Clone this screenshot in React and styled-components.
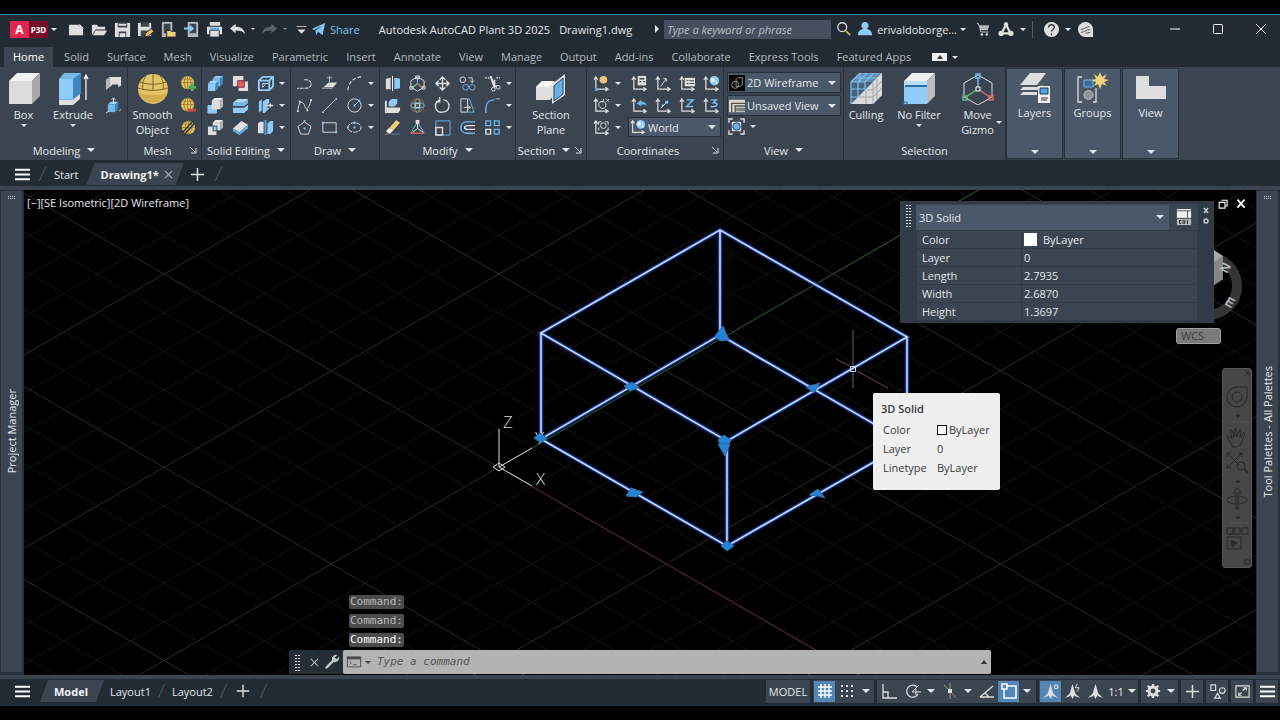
import React from 'react'
import styled, { createGlobalStyle, css } from 'styled-components'

const color = {
  chrome: '#222a33',
  panel: '#3b4551',
  raised: '#4b586a',
  edge: '#27303b',
  text: '#e3e7eb',
  muted: '#b4bac1',
  light: '#dedede',
  shade: '#b5b8bb',
  blue: '#8fcbf7',
  deep: '#3f86bf',
  active: '#5386b7',
  gold: '#e0bf62',
}

const GlobalStyle = createGlobalStyle`
  * { box-sizing: border-box; }
  body {
    margin: 0;
    background: #000;
    color: ${color.text};
    font: 11px/15px 'Open Sans', 'Noto Sans', sans-serif;
  }
  button, input, select { font: inherit; color: inherit; }
  button { padding: 0; border: 0; background: none; }
  svg { display: block; flex: none; }
`

/* ---------- icons ---------- */

const L = color.light
const S = color.shade
const B = color.blue
const D = color.deep
const G = color.gold

const line = (d, stroke = L, w = 1, extra = {}) => (
  <path d={d} fill="none" stroke={stroke} strokeWidth={w} {...extra} />
)

const Cube = ({ x, y, s, k, front, top, side }) => (
  <g>
    <path d={`M${x} ${y + k}h${s}v${s}h${-s}z`} fill={front} />
    <path d={`M${x} ${y + k}l${k} ${-k}h${s}l${-k} ${k}z`} fill={top} />
    <path d={`M${x + s} ${y + k}l${k} ${-k}v${s}l${-k} ${k}z`} fill={side} />
  </g>
)

const ball = (cx, cy, r) => (
  <g>
    <circle cx={cx} cy={cy} r={r} fill={G} />
    {line(`M${cx - r} ${cy}h${2 * r}M${cx} ${cy - r}v${2 * r}M${cx - r * 0.8} ${cy - r * 0.5}h${r * 1.6}`, '#9b7a2c', 0.8)}
    <ellipse cx={cx} cy={cy} rx={r * 0.5} ry={r} fill="none" stroke="#9b7a2c" strokeWidth="0.8" />
  </g>
)

const axes = line('M3 3v12h12M1 5l2-3 2 3M13 13l3 2-3 2', L, 1.3)

const globe = (
  <g>
    <circle cx="12" cy="6" r="5" fill={B} />
    <path d="M9 3l3 1 1 2-3 2-2-2zM13 7l3 1-2 2z" fill="#e8f2fa" />
  </g>
)

const compass = (
  <path d="M9 1l3 10 5 5-5-2-1-1-2 4-2-4-1 1-5 2 5-5z" fill={L} />
)

const icons = {
  fileNew: <path d="M1 4h10l5 5v6H1zM12 3l5 5h-5z" fill={L} />,
  fileOpen: <><path d="M1 15V4h5l2 2h7v3H5z" fill={L} /><path d="M5 10h12l-3 5H2z" fill={L} /></>,
  save: <><path d="M1 2h16v15H1z" fill={L} /><path d="M4 2h10v5H4zM5 11h8v6H5z" fill="#3a444f" /><path d="M6 13h6v4H6zM5 3h8v2H5z" fill={L} /></>,
  saveAs: <><path d="M1 2h14v14H1z" fill={L} /><path d="M4 2h9v4H4zM4 10h8v6H4z" fill="#3a444f" /><path d="M8 17l1-4 6-5 3 3-6 5z" fill="#e8bd62" stroke="#222a33" /></>,
  openDevice: <><path d="M2 1h11v16H2z" fill={S} /><path d="M4 3h7v10H4z" fill="#3a444f" /><path d="M7 10h4l1 1h5v6H7z" fill="#f0cf7e" stroke="#222a33" /></>,
  saveDevice: <><path d="M5 1h11v16H5z" fill={S} /><path d="M7 3h7v10H7z" fill="#3a444f" /><path d="M1 7h6V4l5 4-5 4V9H1z" fill={B} /></>,
  print: <><path d="M4 1h11v4H4zM1 6h16v8H1z" fill={L} /><path d="M4 10h10v7H4z" fill={L} stroke="#222a33" /><path d="M4 7h10v3H4z" fill="#5ea4d8" /></>,
  undo: <path d="M1 8l6-5v3c6 0 9 2 10 8-2-3-5-4-10-4v3z" fill={L} />,
  redo: <path d="M17 8l-6-5v3c-6 0-9 2-10 8 2-3 5-4 10-4v3z" fill="#5b636c" />,
  custom: <path d="M3 5h12v1H3zM4 9h10l-5 5z" fill={L} />,
  share: <path d="M1 9L16 2l-3 14-5-4-2 4-1-5 8-6-9 5z" fill="#7fc3f2" />,
  search: <><circle cx="7" cy="7" r="5" fill="none" stroke={L} strokeWidth="1.5" />{line('M11 11l5 5', '#c9b66a', 2)}</>,
  user: <path d="M9 1a4 4 0 0 1 4 4c0 2-1 3-2 4 4 1 6 3 6 7H1c0-4 2-6 6-7-1-1-2-2-2-4a4 4 0 0 1 4-4z" fill={B} />,
  cart: <><path d="M4 4h12l-2 6H5z" fill={S} />{line('M1 2h2l3 10h9', L)}<circle cx="7" cy="15" r="1.5" fill={L} /><circle cx="13" cy="15" r="1.5" fill={L} /></>,
  network: <>{line('M9 4l5 10H4z', L, 2.5)}<circle cx="9" cy="4" r="2.5" fill={L} /><circle cx="3.5" cy="14" r="3" fill={L} /><circle cx="14.5" cy="14" r="3" fill={L} /></>,
  help: <><circle cx="9" cy="9" r="8" fill={L} />{line('M6 7c0-4 6-4 6 0 0 2-3 2-3 4M9 13v2', '#333c46', 1.5)}</>,
  assistant: <><path d="M9 1a8 8 0 1 0 0 16h8V9a8 8 0 0 0-8-8z" fill={L} />{line('M4 9c3 0 6-3 9-3M4 12c4 0 6-3 10-3M9 13l5-1', '#4a545e', 1)}</>,
  minimize: line('M4 9h10', '#fff'),
  maximize: <rect x="4.5" y="4.5" width="9" height="9" rx="1" fill="none" stroke="#fff" />,
  close: line('M4 4l10 10M14 4L4 14', '#fff'),
  closeTab: line('M4 4l10 10M14 4L4 14', '#aab1b8', 1.5),
  restore: <><path d="M6 3h8v8h-3M3 6h8v8H3z" fill="none" stroke="#fff" strokeWidth="1.5" /></>,
  closeBold: line('M5 4l8 9M13 4l-8 9', '#fff', 2),

  polysolid: <><path d="M1 5l4-3v11l-4 3z" fill={S} /><path d="M5 2h12v9l-3 2v-3H8l-3 3z" fill={L} /></>,
  presspull: <><Cube x={3} y={5} s={8} k={3} front="#75b8ea" top={B} side={D} />{line('M9 1v6M7 3l2-2 2 2M1 17l3-2M15 15l2-2', '#e8edf0')}</>,
  meshAdd: <>{ball(8, 8, 7)}{line('M13 9v8M9 13h8', '#43b05c', 3)}</>,
  meshSub: <>{ball(8, 8, 7)}{line('M8 14h9', '#d24a4a', 3)}</>,
  meshSplit: <>{ball(9, 9, 7)}{line('M2 15L14 2M4 17L16 4', '#2c333b', 1.5)}</>,

  union: <><Cube x={6} y={1} s={8} k={3} front="#78b9ea" top={B} side={D} /><Cube x={1} y={6} s={8} k={3} front={B} top="#a5d6fa" side={D} /></>,
  subtract: <>{line('M1 9v8h9v-8z', B, 1, { fill: B })}<Cube x={5} y={1} s={9} k={3} front={L} top="#f0f0f0" side={S} /></>,
  intersect: <><Cube x={6} y={1} s={8} k={3} front={L} top="#f0f0f0" side={S} /><path d="M1 8h9v9H1z" fill={L} /><path d="M6 7h5v6H6z" fill="#2d4d69" /><path d="M7 8h3v4H7z" fill={B} /></>,
  interfere: <><path d="M1 1h11v11H1zM7 7h10v10H7z" fill={L} /><path d="M6 6h7v7H6z" fill="#e26060" stroke="#7c2d35" /></>,
  slice: <><path d="M1 6l5-4h11l-4 4z" fill="#b4dcf9" /><path d="M1 6h12l4-4v5l-4 3H1z" fill="#74b6e8" /><path d="M1 11h12l4-3v5l-4 4H1z" fill={B} />{line('M1 10.5h12l4-3', '#27303b')}</>,
  slab: <><path d="M1 10l9-8 7 4-9 8z" fill={L} /><path d="M1 10l7 4 9-8v4l-9 7-7-4z" fill="#62a8de" /></>,
  edges: <>{line('M2 6l4-4h11v10l-4 4H2zM2 6h11l4-4M13 6v10', B, 2)}{line('M6 13V9l6 0M6 13l3-3', '#bfe2fb')}</>,
  imprint: <><path d="M2 5l3-3v12l-3 3zM6 5l4-3h3v4l-2 2v3l2 1-5 5H6z" fill={B} />{line('M10 9h7M14 7v4', L, 1.5)}</>,
  separate: <><path d="M1 5l2-2h4v12H1z" fill={L} /><path d="M11 5l3-3h3v11l-3 3h-3z" fill={B} />{line('M9 1v16', '#5aa6df', 2)}</>,

  polyline: line('M1 14h2M4 14h6c8 0 8-8 1-9H8', L, 1.2, { strokeDasharray: '4 1' }),
  planar: <><path d="M4 12l4-4h9l-4 5H2z" fill={L} />{line('M9 1v10M6 3h6M1 14h11', S)}</>,
  arc: line('M2 16C3 8 7 3 16 2', L, 1.2, { strokeDasharray: '4 2' }),
  spline: <>{line('M2 15C3 2 8 5 9 9s4 6 7-6', L)}<path d="M1 14h2v2H1zM3 4h2v2H3zM11 13h2v2h-2zM15 2h2v2h-2z" fill={L} /></>,
  lineTool: <>{line('M3 15L15 3', L)}<path d="M1 15h2v2H1zM15 1h2v2h-2z" fill={B} /></>,
  circle: <><circle cx="9" cy="9" r="7" fill="none" stroke={L} />{line('M9 9l4-4', B)}<path d="M8 8h2v2H8zM13 3h2v2h-2z" fill={B} /></>,
  polygon: <>{line('M9 3l7 5-3 8H5L2 8z', L)}<path d="M8 9h2v2H8zM8 1h2v2H8z" fill={B} /></>,
  rect: <>{line('M2 4h14v10H2z', L)}<path d="M1 3h2v2H1zM15 13h2v2h-2z" fill={B} /></>,
  ellipse: <><ellipse cx="9" cy="9" rx="7" ry="5" fill="none" stroke={L} strokeDasharray="5 1" /><path d="M8 8h2v2H8zM1 8h2v2H1zM8 3h2v2H8z" fill={B} /></>,

  mirror3d: <><path d="M2 4l5-1v12H2z" fill={L} /><path d="M11 3l6 1v10l-6 1z" fill={B} />{line('M9 1v16', '#fff')}</>,
  gizmoMove: <>{line('M9 2l7 4v7l-7 4-7-4V6z', L)}{line('M9 9v-7', '#69b4ea')}{line('M9 9l6 5', '#dc6868', 1.5)}{line('M9 9l-6 5', '#6cc58a', 1.5)}<path d="M7 1h4v3H7zM1 12h3v3H1zM14 12h3v3h-3z" fill="none" stroke={L} /></>,
  move: <>{line('M9 2v14M2 9h14M6 5l3-3 3 3M6 13l3 3 3-3M5 6L2 9l3 3M13 6l3 3-3 3', L, 1.5)}</>,
  copy: <><circle cx="4" cy="5" r="3" fill="none" stroke={L} /><circle cx="7" cy="13" r="3" fill="none" stroke="#6fb6ea" /><circle cx="14" cy="13" r="3" fill="none" stroke="#6fb6ea" />{line('M10 3h4v5M12 6l2 2 2-2', L)}</>,
  trim: <>{line('M1 3h5M13 3h4', L, 1.5, { strokeDasharray: '2 1' })}{line('M7 1l4 12M11 5v7l3 0', L, 2)}<circle cx="10" cy="15" r="2" fill="none" stroke={L} /><circle cx="15" cy="13" r="2" fill="none" stroke={L} /></>,
  align3d: <><path d="M5 5l3-3h6v5l-3 3H5z" fill={B} /><path d="M3 11h14v3l-2 3H3z" fill={L} />{line('M2 17V4', L, 2)}</>,
  gizmoRotate: <><circle cx="9" cy="9" r="7" fill="none" stroke="#c26868" /><ellipse cx="9" cy="9" rx="3" ry="7" fill="none" stroke="#6fc08a" /><ellipse cx="9" cy="9" rx="7" ry="3" fill="none" stroke="#7ab6dc" /><path d="M7 7h4v4H7z" fill="none" stroke={L} /></>,
  rotate: line('M6 3C-2 8 2 17 9 16c9 0 9-12 1-13M6 0v5H2', L, 1.5),
  stretch: <>{line('M2 2h7v14H2z', L)}{line('M9 2l2 0 5 14H9', '#6fb6ea')}{line('M5 11h7M10 9l2 2-2 2', L)}</>,
  fillet: <>{line('M2 17v-5C2 6 6 3 11 3', '#6fb6ea', 1.5)}{line('M12 2h5', S)}</>,
  erase: <><path d="M6 9l7-8 4 3-7 8z" fill="#f1cd76" /><path d="M6 9l4 3-4 4-4-3z" fill="#f3efe7" />{line('M1 16h4', '#d86868')}{line('M8 16h9', '#5c88ad')}</>,
  gizmoScale: <>{line('M9 3L2 15', '#6cc58a')}{line('M9 3l7 12', '#6fb6ea')}{line('M2 15h14', '#d86868', 1.5)}{line('M9 3v7l-5 4M9 10l6 4', L)}<path d="M7 1h4v4H7z" fill={L} /></>,
  scale: <>{line('M2 2h15v15H2z', '#6fb6ea')}{line('M2 9h7v8H2z', L, 1.5)}</>,
  offset: <>{line('M17 3H8C0 3 0 15 8 15h9', '#6fb6ea', 1.5)}{line('M17 7H9c-4 0-4 4 0 4h8', L, 1.5)}</>,
  array: <>{line('M2 2h5v5H2zM11 2h5v5h-5zM11 11h5v5h-5z', '#6fb6ea', 1.5)}{line('M2 11h5v5H2z', L, 1.5)}</>,

  ucsOrigin: <>{axes}<circle cx="11" cy="5" r="4" fill="#f3c36e" /><path d="M2 14h3v3H2z" fill="#5aa6df" /></>,
  ucsCalc: <>{axes}<path d="M7 1h9v10H7z" fill={L} />{line('M9 4h5M9 7h2M13 7h2', '#3b4551', 1.5)}</>,
  ucsView: <>{axes}{line('M6 12l6-8M9 4h3v3', L)}</>,
  ucsNamed: <>{axes}<path d="M6 3h11v9H6z" fill={L} />{line('M8 6h2M11 6h5M8 9h2M11 9h5', '#3b4551')}</>,
  ucsWorld: <>{axes}{globe}</>,
  ucsX: <>{axes}{line('M11 5c-7-2-6 8 0 7 4-1 3-6 1-7M11 2v3H8M14 2l3 3M17 2l-3 3', L)}</>,
  ucsPrev: <>{axes}<path d="M6 7l5-4v2c4 0 5 2 6 5-2-2-3-2-6-2v2z" fill="#6fb6ea" /></>,
  ucs3pt: <>{axes}{line('M6 12l6-6', L)}<path d="M11 4h3v3h-3zM7 8h2v2H7z" fill={B} /></>,
  ucsZ: <>{axes}{line('M8 3h7l-7 7h7', '#7abef0', 1.5)}</>,
  ucs3: <>{axes}{line('M8 3h6l-3 3c6 0 5 5-3 4', '#7abef0', 1.5)}</>,
  ucsFace: <>{axes}{line('M6 6V3h3M13 3h3v3M16 9v3h-2M6 9v3', L)}<circle cx="11" cy="7" r="3" fill="none" stroke={L} /></>,

  wire: <><path d="M0 0h18v18H0z" fill="#050505" /><circle cx="7" cy="11" r="4" fill="none" stroke="#9b9b9b" />{line('M8 5l2-2h5v8l-3 2H8z', '#9b9b9b')}</>,
  unsaved: <><path d="M0 2h18v14H0z" fill="#d9d8c8" />{line('M3 16V6h15M7 16V9h11', '#4f5650', 1.5)}<path d="M8 11h10v4H8z" fill="#7d8378" /></>,
  visual: <>{line('M1 5V1h4M13 1h4v4M17 13v4h-4M5 17H1v-4', L, 1.5)}<path d="M4 4h10v10H4z" fill={L} /><circle cx="9" cy="9" r="4" fill="#6bb1e6" stroke="#2c4c66" /></>,

  grid: line('M5 2v14M9 2v14M13 2v14M2 5h14M2 9h14M2 13h14', '#fff', 1.4),
  snap: <path d="M3 3h2v2H3zM8 3h2v2H8zM13 3h2v2h-2zM3 8h2v2H3zM8 8h2v2H8zM13 8h2v2h-2zM3 13h2v2H3zM8 13h2v2H8zM13 13h2v2h-2z" fill={L} />,
  ortho: line('M2 2v14h14M2 10h5v6', L, 1.3),
  polar: <><path d="M13 5a6 6 0 1 0 1 7" fill="none" stroke={L} strokeWidth="1.3" />{line('M8 10l7-7M8 10h9M12 7v6', L)}</>,
  iso: <>{line('M9 1v16M9 9L3 3', '#8fb08a')}{line('M9 9l6 7', '#c46d6d')}<path d="M7 7h4v4H7z" fill={L} /></>,
  track: line('M2 15h14M2 15L15 4M7 11l4 4', L, 1.3),
  osnap: line('M6 4h10v12H4V7M2 2h5v5H2z', '#fff', 1.5),
  annoVis: <>{compass}<circle cx="15" cy="4" r="2" fill="none" stroke="#fff" /></>,
  annoAuto: <>{compass}{line('M14 1l-2 4h4l-2 4', L)}</>,
  anno: compass,
  gear: <><circle cx="9" cy="9" r="4.500" fill="none" stroke={L} strokeWidth="3.500" />{line('M9 1v3M9 14v3M1 9h3M14 9h3M3 3l3 3M12 12l3 3M15 3l-3 3M6 12l-3 3', L, 2.5)}</>,
  plus: line('M9 2v14M2 9h14', L, 1.6),
  shapes: <>{line('M2 2h5v6H2zM9 11l3 5H6z', L, 1.2)}<circle cx="14" cy="8" r="3" fill="none" stroke={L} strokeWidth="1.2" /></>,
  screen: <>{line('M2 3h14v12H2z', L, 1.2)}{line('M9 8l4-3M10 5h3v3M8 10l-3 3M5 10v3h3', L, 1.2)}</>,
  menu: line('M1 4h16M1 9h16M1 14h16', '#fff', 2),

  wrench: <path d="M2 14l7-7a5 5 0 0 1 6-6l-3 3 2 2 3-3a5 5 0 0 1-6 6l-7 7a1 1 0 0 1-2-2z" fill="#c3c7ca" />,
  prompt: <>{line('M1.500 3.500h15v11h-15z', '#4a4a4a')}<path d="M1 3h16v3H1z" fill="#4a4a4a" />{line('M4 8l2 2-2 2M8 12h4', '#4a4a4a')}</>,
  cui: <><path d="M1 0h16v10H1z" fill="#f1f1f1" />{line('M1 2h16M13 2v8', '#3b4551')}<path d="M1 11h16v7H1z" fill="#b9bdc1" />{line('M6 13H4v3h2M8 12v4h2v-4M13 12v5', '#2b343e', 1.2)}</>,
}

const Icon = ({ name, size = 18 }) => (
  <svg width={size} height={size} viewBox="0 0 18 18" aria-hidden="true">{icons[name]}</svg>
)

const Caret = styled.span`
  flex: none;
  width: 0;
  height: 0;
  border: ${p => p.$size || 3}px solid transparent;
  border-top-color: ${p => p.$color || color.text};
  border-bottom-width: 0;
  ${p => p.$up && css`
    border-bottom: 4px solid ${p.$color};
    border-top: 0;
  `}
`

const bigIcons = {
  box: <Cube x={1} y={0} s={23} k={8} front="#dcdcdc" top="#f1f1f1" side="#a9a9a9" />,
  extrude: <><path d="M2 25l14 0 7-5v6l-7 6H2z" fill={L} /><path d="M2 6l5-6h17v20l-8 7H2z" fill="#77b8e8" /><path d="M2 6h14v20H2z" fill={B} /><path d="M16 6l8-6v20l-8 6z" fill={D} />{line('M29 27V3M27 6l2-4 2 4', '#fff', 1.2)}</>,
  smooth: <><circle cx="16" cy="16" r="15" fill="#e2c468" /><path d="M2 20c8 3 20 3 28 0a15 15 0 0 1-28 0z" fill="#d3ab4b" />{line('M1 15c8 3 22 3 30 0M3 9c8 3 18 3 26 0M16 1v16M9 3C6 7 5 12 6 16M23 3c3 4 4 9 3 13', '#7d6524')}</>,
  section: <><path d="M1 14l6-6h12v14l-4 5H1z" fill={L} /><path d="M1 14l6-6h13l-5 6z" fill="#f6f6f6" /><path d="M17 11L30 1v21L17 31z" fill={L} /><path d="M19 13l9-8v16l-9 7z" fill="#68b1e8" stroke="#24435c" /></>,
  culling: <><Cube x={1} y={0} s={22} k={9} front="#45637d" top="#5f8fb3" side="#bfc3c6" /><path d="M1 31L32 0v22l-9 9z" fill="#d9dadb" />{line('M1 31V9h15M1 9l9-9h21M8 9v15M15 9v8M1 16h14M1 24h7M8 9l9-9M15 9l9-9M5 5h22M10 0v9', '#7ec0ef', 1.2)}{line('M23 10v21M9 24h14l9-9M17 17h6l9-9M16 17v14M27 6v21', '#a2a5a8')}</>,
  noFilter: <><Cube x={1} y={0} s={23} k={8} front={B} top="#efefef" side="#bcbcbc" />{line('M2 13h22', '#2e6fa6', 2)}<path d="M1 8h23v4H1z" fill="#b7dff9" />{line('M1 29h3v3H1z', '#2e6fa6')}</>,
  gizmo: <>{line('M16 2l14 8v14l-14 8-14-8V10z', '#d8dcdf')}{line('M16 16V5', '#69b4ea', 1.5)}{line('M16 16L4 24', '#5cb87c', 1.5)}{line('M16 16l12 8', '#dc6868', 1.5)}{line('M14 1h4v4h-4z', '#69b4ea', 1.500)}{line('M1 23h4v4H1z', '#5cb87c', 1.5)}{line('M27 23h4v4h-4z', '#dc6868', 1.5)}<path d="M14 14h4v4h-4z" fill="#3b4551" stroke="#fff" /></>,
  layers: <><path d="M1 13L11 1h16L18 13zM1 18l3-3h16l4-3-6 6zM1 23l3-3h14v3z" fill={L} /><path d="M19 14h12v17H19z" fill="#f1f1f1" /><path d="M21 16h8v6h-8z" fill="#4fa3e0" stroke="#1f3246" />{line('M22 26h7M22 28h6', '#333')}</>,
  groups: <>{line('M5 5H1v25h4M19 16v14h-3', L, 1.3)}<path d="M7 8h9v7H7z" fill="#356f9e" stroke="#72b4e4" /><circle cx="11.500" cy="23" r="4.500" fill="#8d949c" stroke="#b8bdc2" /><path d="M23 0l2 5 5-3-3 5 5 1-5 2 3 4-5-2-2 5-2-5-4 2 2-4-5-2 5-1-2-5 4 3z" fill="#f5d27c" /></>,
  baseView: <path d="M1 4h13v10h17v13H1z" fill={L} />,
}

const BigIcon = ({ name }) => (
  <svg width="32" height="32" viewBox="0 0 32 32" aria-hidden="true">{bigIcons[name]}</svg>
)

/* ---------- frame ---------- */

const Shell = styled.div`
  display: flex;
  flex-direction: column;
  height: 100vh;
  min-height: 560px;
  padding: 14px 0;
  overflow: hidden;
`

const TitleBar = styled.header`
  display: flex;
  align-items: center;
  height: 33px;
  padding: 0 10px 4px;
  background: ${color.chrome};
  border-top: 1px solid #2b87ad;
`

const Group = styled.div`
  display: flex;
  align-items: center;
  gap: ${p => p.$gap || 5}px;
  margin-left: ${p => p.$before || 0}px;
`

const Logo = styled.button`
  display: flex;
  height: 17px;
  line-height: 17px;
  color: #fff;
  font-weight: 700;
`

const LogoMark = styled.span`
  width: 19px;
  background: #e5244f;
  font-size: 12px;
`

const LogoName = styled.span`
  width: 19px;
  background: #7a0c2b;
  font-size: 8px;
`

const IconButton = styled.button`
  display: flex;
  align-items: center;
  justify-content: center;
  min-width: 18px;
  height: 18px;
`

const ShareLink = styled.a`
  display: flex;
  align-items: center;
  gap: 3px;
  margin-left: -4px;
  color: #7fc3f2;
  text-decoration: none;
`

const TitleText = styled.h1`
  display: flex;
  gap: 9px;
  margin: 0 23px 0 auto;
  font-size: 11px;
  font-weight: 400;
  white-space: nowrap;
`

const Play = styled.span`
  border: 4px solid transparent;
  border-left-color: ${color.text};
  border-right-width: 0;
`

const SearchBox = styled.input`
  width: 167px;
  height: 19px;
  margin-left: 5px;
  padding: 0 3px;
  border: 0;
  background: #454f5f;
  font-style: italic;
  &::placeholder { color: #b9bfc6; }
`

const Separator = styled.span`
  width: 1px;
  height: 17px;
  margin: 0 4px 0 1px;
  background: #55606b;
`

const TabBar = styled.nav`
  display: flex;
  align-items: center;
  height: 20px;
  padding-left: 4px;
  background: ${color.chrome};
`

const RibbonTab = styled.button`
  height: 20px;
  padding: 0 9px 1px;
  margin-right: ${p => (p.$active ? 2 : 0)}px;
  background: ${p => (p.$active ? color.panel : 'transparent')};
  color: ${p => (p.$active ? '#fff' : color.muted)};
  white-space: nowrap;
`

const Toggle = styled.button`
  display: flex;
  align-items: center;
  justify-content: center;
  width: 15px;
  height: 8px;
  margin: 0 5px 0 12px;
  background: #eee;
`

/* ---------- ribbon ---------- */

const Ribbon = styled.div`
  display: flex;
  height: 93px;
  padding-left: 1px;
  background: ${color.panel};
`

const PanelBox = styled.section`
  display: flex;
  flex-direction: column;
  flex: 0 0 ${p => p.$width}px;
  border-right: 1px solid ${color.edge};
`

const PanelBody = styled.div`
  display: flex;
  flex: 1;
  padding: 5px 0 0 ${p => p.$pad || 0}px;
`

const PanelTitle = styled.div`
  display: flex;
  align-items: center;
  justify-content: center;
  gap: 2px;
  height: 19px;
  padding-bottom: 1px;
`

const Launcher = styled.svg`
  margin-left: auto;
`

const PanelName = styled.span`
  display: flex;
  align-items: center;
  gap: 7px;
  margin-left: ${p => (p.$far ? 'auto' : 0)};
`

const BigTool = styled.button`
  display: flex;
  flex-direction: column;
  align-items: center;
  gap: 2px;
  width: ${p => p.$width}px;
  padding-top: 1px;
`

const WithCaret = styled.span`
  display: flex;
  align-items: center;
  gap: ${p => p.$gap}px;
  padding-left: ${p => p.$before || 0}px;
`

const ToolGrid = styled.div`
  display: grid;
  grid-template-columns: repeat(${p => p.$cols}, ${p => p.$cell || 25}px) ${p => (p.$carets ? '8px' : '')};
  grid-auto-rows: 22px;
  align-items: center;
  justify-items: center;
`

const Picker = styled.div`
  display: flex;
  align-items: center;
  gap: 1px;
  width: ${p => p.$width}px;
  height: ${p => p.$height || 20}px;
  padding: 0 4px 0 1px;
  background: ${color.raised};
  border: 1px solid ${p => (p.$flat ? color.raised : color.edge)};
  select {
    flex: 1;
    min-width: 0;
    border: 0;
    outline: 0;
    padding: 0 0 0 1px;
    background: transparent;
    appearance: none;
  }
`

const Stack = styled.div`
  display: flex;
  flex-direction: column;
  gap: ${p => p.$gap || 0}px;
`

const Collapsed = styled.button`
  display: flex;
  flex-direction: column;
  align-items: center;
  width: 57px;
  height: 91px;
  margin: 1px 1px 0 0;
  padding: 3px 0 4px;
  background: ${color.raised};
  border: 1px solid ${color.edge};
  gap: 1px;
  ${Caret} { margin-top: auto; }
`

const Panel = ({ title, width, menu, launcher, pad, children }) => (
  <PanelBox $width={width}>
    <PanelBody $pad={pad}>{children}</PanelBody>
    <PanelTitle>
      <PanelName $far={launcher}>{title}{menu && <Caret $size={4} />}</PanelName>
      {launcher && (
        <Launcher width="12" height="8" viewBox="0 0 12 8">
          <path d="M1 1l5 5M7 2v5H2" fill="none" stroke={L} />
        </Launcher>
      )}
    </PanelTitle>
  </PanelBox>
)

const Tools = ({ rows, cell, carets }) => (
  <ToolGrid $cols={rows[0].length} $cell={cell} $carets={carets}>
    {rows.map(row => (
      <React.Fragment key={row[0]}>
        {row.map(name => (
          <IconButton key={name} aria-label={name}><Icon name={name} size={17} /></IconButton>
        ))}
        {carets && <Caret $size={3} />}
      </React.Fragment>
    ))}
  </ToolGrid>
)

const Select = ({ icon, label, ...rest }) => (
  <Picker {...rest}>
    {icon && <Icon name={icon} size={16} />}
    <select aria-label={label} defaultValue={label}><option>{label}</option></select>
    <Caret $size={4} />
  </Picker>
)

/* ---------- document tabs ---------- */

const FileTabs = styled.nav`
  display: flex;
  align-items: center;
  height: 26px;
  padding: 2px 0 0 13px;
  background: ${color.chrome};
`

const Slash = styled.span`
  width: 1px;
  height: 14px;
  margin: 0 ${p => p.$space || 12}px;
  background: #505a65;
  transform: skewX(-24deg);
`

const FlatTab = styled.button`
  height: 22px;
`

const SlantTab = styled.div`
  display: flex;
  align-items: center;
  gap: 1px;
  padding: 0 ${p => p.$pad}px 0 14px;
  background: ${color.panel};
  clip-path: polygon(8px 0, 100% 0, calc(100% - 8px) 100%, 0 100%);
  button { font-weight: 700; color: #f2f4f6; }
`

/* ---------- workspace ---------- */

const Workspace = styled.main`
  display: flex;
  flex: 1;
  min-height: 0;
  border-top: 4px solid ${color.panel};
  border-bottom: 4px solid ${color.panel};
`

const SideBar = styled.aside`
  display: flex;
  flex-direction: column;
  align-items: center;
  justify-content: center;
  flex: 0 0 24px;
  position: relative;
  background: ${color.panel};
  border: solid ${color.edge};
  border-width: 1px 2px 3px 1px;
  span { writing-mode: vertical-rl; transform: rotate(180deg); white-space: nowrap; }
`

const Dots = styled.i`
  position: absolute;
  top: 5px;
  width: 9px;
  height: 4px;
  background: conic-gradient(#c8cdd2 25%, transparent 0) 0 0 / 2px 2px;
`

const Canvas = styled.div`
  position: relative;
  flex: 1;
  min-width: 0;
  overflow: hidden;
  background: #000;
`

const Drawing = styled.svg`
  position: absolute;
  inset: 0;
  width: 100%;
  height: 100%;
`

const ViewLabel = styled.div`
  position: absolute;
  top: 5px;
  left: 3px;
`

const WindowButtons = styled.div`
  position: absolute;
  top: 5px;
  right: 6px;
  display: flex;
`

const PropsPalette = styled.section`
  position: absolute;
  top: 11px;
  right: 42px;
  display: flex;
  width: 314px;
  padding: 3px 0 2px;
  background: #303b47;
`

const Grip = styled.i`
  width: 6px;
  height: ${p => p.$tall || 16}px;
  margin: 1px 5px 0;
  background: conic-gradient(from 90deg at 1px 1px, transparent 75%, #e3e6e9 0) 0 0 / 3px 3px;
`

const PropsHead = styled.div`
  display: flex;
  align-items: center;
  gap: 7px;
  height: 26px;
`

const PropsMain = styled.div`
  flex: 1;
  background: ${color.panel};
`

const PropsTable = styled.table`
  width: 100%;
  border-collapse: collapse;
  th, td {
    height: 18px;
    padding: 0 3px 0 5px;
    border: 1px solid #303b47;
    line-height: 15px;
    text-align: left;
    font-weight: 400;
  }
  th { width: 105px; }
  td { padding-left: 2px; }
`

const Swatch = styled.i`
  display: inline-block;
  width: ${p => p.$size}px;
  height: ${p => p.$size}px;
  margin-right: ${p => p.$gap}px;
  vertical-align: ${p => (p.$line ? -1 : -2)}px;
  background: #fff;
  border: ${p => (p.$line ? '1px solid #111' : 0)};
`

const PropsSide = styled.div`
  display: flex;
  flex-direction: column;
  align-items: center;
  width: 16px;
  padding-top: 2px;
`

const HoverTip = styled.div`
  position: absolute;
  top: 203px;
  left: 849px;
  width: 127px;
  height: 97px;
  padding: 8px;
  background: #efefef;
  border-radius: 2px;
  color: #3a3a3a;
  strong { display: block; font-weight: 600; }
  dl {
    display: grid;
    grid-template-columns: 54px 1fr;
    grid-auto-rows: 19px;
    align-items: center;
    margin: 4px 0 0 2px;
  }
  dd { margin: 0; white-space: nowrap; }
`

const Wcs = styled.button`
  position: absolute;
  top: 138px;
  right: 35px;
  width: 45px;
  height: 16px;
  padding-left: 4px;
  border: 1px solid #a0a0a0;
  border-radius: 3px;
  background: #7b7b7b;
  color: #3c3c3c;
  line-height: 12px;
  text-align: left;
`

const NavBar = styled.div`
  position: absolute;
  top: 178px;
  right: 4px;
  width: 30px;
  height: 200px;
  border: 1px solid #555;
  border-radius: 3px;
  background: #464646;
`

const CommandArea = styled.div`
  position: absolute;
  bottom: 1px;
  left: 265px;
  right: 265px;
  font: 11px/14px 'DejaVu Sans Mono', monospace;
`

const History = styled.ol`
  display: flex;
  flex-direction: column;
  align-items: flex-start;
  gap: 5px;
  margin: 0 0 3px 60px;
  padding: 0;
  list-style: none;
  li {
    padding: 0 1px;
    background: #4c4c4c;
    border-radius: 2px;
    color: #b9b9b9;
  }
  li:last-child { color: #fff; }
`

const CommandLine = styled.div`
  display: flex;
  align-items: center;
  height: 24px;
  background: #242c35;
`

const CommandField = styled.label`
  display: flex;
  flex: 1;
  align-items: center;
  gap: 3px;
  height: 24px;
  padding: 0 4px 0 3px;
  margin-left: 2px;
  background: #b3b3b3;
  border-radius: 2px;
  input {
    flex: 1;
    border: 0;
    outline: 0;
    padding-left: 3px;
    background: none;
    color: #333;
    font-style: italic;
    &::placeholder { color: #555; }
  }
`

/* ---------- status bar ---------- */

const StatusBar = styled.footer`
  display: flex;
  align-items: center;
  flex: 0 0 27px;
  padding: 0 2px 3px 13px;
  background: ${color.chrome};
`

const StatusTools = styled.div`
  display: flex;
  gap: 3px;
  margin-left: auto;
`

const StatusGroup = styled.div`
  display: flex;
  align-items: center;
  justify-content: center;
  width: ${p => p.$width}px;
  height: 23px;
  background: ${color.panel};
`

const StatusButton = styled.button`
  display: flex;
  align-items: center;
  justify-content: center;
  width: ${p => p.$width || 23}px;
  height: 21px;
  background: ${p => (p.$active ? color.active : 'transparent')};
`

/* ---------- isometric drawing ---------- */

const ORIGIN = { x: 498.7, y: 467.3 }
const SLOPE = 0.5774
const STEP = 38.64

const IsoGrid = () => {
  const lines = []
  for (let k = -24; k <= 24; k++) {
    [1, -1].forEach(dir => {
      const at = x => ORIGIN.y + k * STEP + dir * SLOPE * (x - ORIGIN.x)
      lines.push({ key: `${dir}:${k}`, major: k % 5 === 0, y1: at(0), y2: at(1280) })
    })
  }
  return lines.map(l => (
    <line key={l.key} x1="0" x2="1280" y1={l.y1} y2={l.y2} stroke={l.major ? '#2b2b2e' : '#141415'} />
  ))
}

const EDGES = 'M720 230L541 333L727 441L907 337zM541 333V439L727 546L907 443V337M727 441V546M720 230V335L541 439M720 335L907 443'
const GRIPS = [
  'M714 337l9-11 6 14-8 1z', 'M624 386l8-4 7 5-9 4z', 'M534 438l6-5 7 5-6 5z',
  'M626 496l5-8 12 4-7 5z', 'M721 546l6-5 7 5-7 5z', 'M809 495l9-6 7 9-7-2z',
  'M806 387l14-4-6 10z', 'M718 440l6-5 7 5-2 4h-9z', 'M718 444h12l-5 12z',
]

const Model = () => (
  <Drawing viewBox="24 190 1232 485" preserveAspectRatio="xMinYMin slice">
    <IsoGrid />
    <path d="M532 448L980 189" stroke="#1f5523" />
    <path d="M532 486.500L863 677" stroke="#5a2424" />
    <path d={EDGES} fill="none" stroke="#0f2f86" strokeWidth="5" opacity="0.5" />
    <path d={EDGES} fill="none" stroke="#2a57c4" strokeWidth="3" />
    <path d={EDGES} fill="none" stroke="#e6eeff" strokeWidth="1.300" />
    <g fill="none" stroke="#dadada">
      <path d="M499 467V429M499 467l33-19M499 467l33 19M493 467l6-4 6 4-6 4z" />
      <path d="M853 330v36M853 372v16" stroke="#62626e" />
      <path d="M836 359l14 7M857 371l31 17" stroke="#6b4a44" />
      <path d="M850.500 366.500h5v5h-5z" />
    </g>
    <g fill="#dadada" fontFamily="Open Sans" fontSize="17" fontWeight="300">
      <text x="503" y="428">Z</text>
      <text x="536" y="485">X</text>
      <text x="535" y="444">Y</text>
    </g>
    {GRIPS.map(d => <path key={d} d={d} fill="#2583d8" stroke="#33699c" />)}
    <circle cx="1208" cy="286" r="29" fill="none" stroke="#353535" strokeWidth="10" />
    <path d="M1190 256l24-6 9 6v23l-9 6-24-8z" fill="#a9a9a9" />
    <path d="M1214 262l9-6v23l-9 6z" fill="#868686" />
    <g fill="#b5b5b5" fontFamily="Liberation Sans" fontSize="13" fontWeight="700">
      <text transform="translate(1227 274) rotate(-62)">N</text>
      <text transform="translate(1224 304) rotate(30)">E</text>
    </g>
  </Drawing>
)

const NavIcons = () => (
  <svg width="28" height="198" viewBox="0 0 28 198" fill="none" stroke="#292929">
    <path d="M22 3h4v4M22 7l4-4M22 191h5v4h-5z" />
    <path d="M14 18h10v10a10 10 0 1 1-10-10z" />
    <circle cx="14" cy="28" r="5" />
    <path d="M13 46h4l-2 2zM13 112h4l-2 2zM13 148h4l-2 2z" fill="#292929" />
    <path d="M9 76l-5-8c1-2 3 0 5 2l-2-9c2-2 3 3 4 7l1-9c2 0 2 4 2 9l3-8c2 1 0 6 0 9l4-6c2 1-2 8-3 12l-3 3h-6z" />
    <path d="M4 84l15 15M19 84L4 99M4 88v-4h4M15 84h4v4M4 95v4h4" />
    <circle cx="18" cy="97" r="4" /><path d="M21 100l4 4" strokeWidth="2" />
    <path d="M13 140v-16h-3l4-5 4 5h-3v16z" />
    <ellipse cx="14" cy="131" rx="10" ry="4" />
    <path d="M4 159h6v6H4zM11 159h6v6h-6zM19 159h6v6h-6zM4 168h14v12H4z" />
    <path d="M8 171l6 3-5 4z" fill="#292929" />
    <path d="M8 53h17M8 154h17" stroke="#555" />
  </svg>
)

const tabs = ['Home', 'Solid', 'Surface', 'Mesh', 'Visualize', 'Parametric', 'Insert', 'Annotate', 'View',
  'Manage', 'Output', 'Add-ins', 'Collaborate', 'Express Tools', 'Featured Apps']

const properties = [['Layer', '0'], ['Length', '2.7935'], ['Width', '2.6870'], ['Height', '1.3697']]

const Title = () => (
  <TitleBar>
    <Logo aria-label="Application menu"><LogoMark>A</LogoMark><LogoName>P3D</LogoName></Logo>
    <Group $before={3}><Caret /></Group>
    <Group $gap={5} $before={10}>
      {['fileNew', 'fileOpen', 'save', 'saveAs', 'openDevice', 'saveDevice', 'print', 'undo'].map(name => (
        <IconButton key={name} aria-label={name}><Icon name={name} size={17} /></IconButton>
      ))}
      <Caret $size={2} />
      <IconButton aria-label="Redo"><Icon name="redo" size={17} /></IconButton>
      <Caret $size={2} $color="#7d858d" />
      <IconButton aria-label="Customize"><Icon name="custom" size={15} /></IconButton>
      <ShareLink href="#share"><Icon name="share" size={16} />Share</ShareLink>
    </Group>
    <TitleText><span>Autodesk AutoCAD Plant 3D 2025</span><span>Drawing1.dwg</span></TitleText>
    <Play />
    <SearchBox aria-label="Search" placeholder="Type a keyword or phrase" />
    <Group $gap={3} $before={4}>
      <IconButton aria-label="Search"><Icon name="search" size={16} /></IconButton>
      <IconButton aria-label="Account"><Icon name="user" size={16} /></IconButton>
      <span>erivaldoborge...</span>
      <Caret />
    </Group>
    <Group $before={8}>
      <IconButton aria-label="Store"><Icon name="cart" size={15} /></IconButton>
      <IconButton aria-label="Apps"><Icon name="network" size={16} /></IconButton>
      <Caret />
      <Separator />
      <IconButton aria-label="Help"><Icon name="help" size={17} /></IconButton>
      <Caret />
      <IconButton aria-label="Assistant"><Icon name="assistant" size={17} /></IconButton>
    </Group>
    <Group $gap={25} $before={72}>
      {['minimize', 'maximize', 'close'].map(name => (
        <IconButton key={name} aria-label={name}><Icon name={name} /></IconButton>
      ))}
    </Group>
  </TitleBar>
)

const RibbonPanels = () => (
  <Ribbon>
    <Panel title="Modeling" width={127} menu>
      <BigTool $width={45}><BigIcon name="box" />Box<Caret $size={3} /></BigTool>
      <BigTool $width={54}><BigIcon name="extrude" />Extrude<Caret $size={3} /></BigTool>
      <Tools cell={27} rows={[['polysolid'], ['presspull']]} />
    </Panel>
    <Panel title="Mesh" width={74} launcher>
      <BigTool $width={49}><BigIcon name="smooth" />Smooth<br />Object</BigTool>
      <Tools cell={22} rows={[['meshAdd'], ['meshSub'], ['meshSplit']]} />
    </Panel>
    <Panel title="Solid Editing" width={89} pad={1} menu>
      <Tools carets rows={[['union', 'interfere', 'edges'], ['subtract', 'slice', 'imprint'], ['intersect', 'slab', 'separate']]} />
    </Panel>
    <Panel title="Draw" width={89} pad={1} menu>
      <Tools carets rows={[['polyline', 'planar', 'arc'], ['spline', 'lineTool', 'circle'], ['polygon', 'rect', 'ellipse']]} />
    </Panel>
    <Panel title="Modify" width={136} menu>
      <Tools
        carets
        rows={[
          ['mirror3d', 'gizmoMove', 'move', 'copy', 'trim'],
          ['align3d', 'gizmoRotate', 'rotate', 'stretch', 'fillet'],
          ['erase', 'gizmoScale', 'scale', 'offset', 'array'],
        ]}
      />
    </Panel>
    <Panel title="Section" width={71} menu launcher>
      <BigTool $width={70}><BigIcon name="section" />Section<br />Plane</BigTool>
    </Panel>
    <Panel title="Coordinates" width={137} pad={2} launcher>
      <Tools carets rows={[['ucsOrigin'], ['ucsX'], ['ucsFace']]} />
      <Stack $gap={1}>
        <Group $before={5}>
          <Tools cell={24} rows={[['ucsCalc', 'ucsView', 'ucsNamed', 'ucsWorld'], ['ucsPrev', 'ucs3pt', 'ucsZ', 'ucs3']]} />
        </Group>
        <Group $before={6}><Select icon="ucsWorld" label="World" $width={93} /></Group>
      </Stack>
    </Panel>
    <Panel title="View" width={120} pad={3} menu>
      <Stack $gap={2}>
        <Select icon="wire" label="2D Wireframe" $width={114} $height={21} />
        <Select icon="unsaved" label="Unsaved View" $width={114} $height={21} />
        <Group $before={1}><Icon name="visual" size={17} /><Caret /></Group>
      </Stack>
    </Panel>
    <Panel title="Selection" width={162}>
      <BigTool $width={44}><BigIcon name="culling" />Culling</BigTool>
      <BigTool $width={62}><BigIcon name="noFilter" />No Filter<Caret $size={3} /></BigTool>
      <BigTool $width={55}>
        <BigIcon name="gizmo" />
        <WithCaret $gap={2} $before={8}><span>Move<br />Gizmo</span><Caret /></WithCaret>
      </BigTool>
    </Panel>
    <Collapsed><BigIcon name="layers" />Layers<Caret $size={4} /></Collapsed>
    <Collapsed><BigIcon name="groups" />Groups<Caret $size={4} /></Collapsed>
    <Collapsed><BigIcon name="baseView" />View<Caret $size={4} /></Collapsed>
  </Ribbon>
)

const Properties = () => (
  <PropsPalette>
    <Grip $tall={24} />
    <PropsMain>
      <PropsHead>
        <Select label="3D Solid" $width={253} $height={25} $flat />
        <Icon name="cui" size={16} />
      </PropsHead>
      <PropsTable>
        <tbody>
          <tr><th scope="row">Color</th><td><Swatch $size={13} $gap={6} />ByLayer</td></tr>
          {properties.map(([name, value]) => (
            <tr key={name}><th scope="row">{name}</th><td>{value}</td></tr>
          ))}
        </tbody>
      </PropsTable>
    </PropsMain>
    <PropsSide>
      <svg width="8" height="20" viewBox="0 0 8 20" fill="none" stroke="#c4c9ce">
        <path d="M2 2l4 5M6 2L2 7" strokeWidth="1.500" />
        <circle cx="4" cy="15" r="2" strokeWidth="1.500" />
      </svg>
    </PropsSide>
  </PropsPalette>
)

const Status = () => (
  <StatusBar>
    <IconButton aria-label="Layouts"><Icon name="menu" size={17} /></IconButton>
    <Group $before={9}>
      <SlantTab $pad={16}><FlatTab>Model</FlatTab></SlantTab>
    </Group>
    <Group $before={6} $gap={1}>
      <FlatTab>Layout1</FlatTab><Slash $space={9} />
      <FlatTab>Layout2</FlatTab><Slash $space={9} />
      <IconButton aria-label="New layout"><Icon name="plus" size={16} /></IconButton>
      <Slash $space={10} />
    </Group>
    <StatusTools>
      <StatusGroup $width={44}><StatusButton $width={44}>MODEL</StatusButton></StatusGroup>
      <StatusGroup $width={61}>
        <StatusButton $width={21} $active aria-label="Grid"><Icon name="grid" /></StatusButton>
        <StatusButton aria-label="Snap"><Icon name="snap" /></StatusButton>
        <StatusButton $width={15} aria-label="Snap options"><Caret $size={4} /></StatusButton>
      </StatusGroup>
      <StatusGroup $width={159}>
        <StatusButton aria-label="Ortho"><Icon name="ortho" /></StatusButton>
        <StatusButton aria-label="Polar"><Icon name="polar" /></StatusButton>
        <StatusButton $width={14} aria-label="Polar options"><Caret $size={4} /></StatusButton>
        <StatusButton aria-label="Isodraft"><Icon name="iso" /></StatusButton>
        <StatusButton $width={14} aria-label="Isodraft options"><Caret $size={4} /></StatusButton>
        <StatusButton aria-label="Tracking"><Icon name="track" /></StatusButton>
        <StatusButton $width={21} $active aria-label="Object snap"><Icon name="osnap" /></StatusButton>
        <StatusButton $width={16} aria-label="Object snap options"><Caret $size={4} /></StatusButton>
      </StatusGroup>
      <StatusGroup $width={99}>
        <StatusButton $width={21} $active aria-label="Annotation visibility"><Icon name="annoVis" size={17} /></StatusButton>
        <StatusButton aria-label="Auto scale"><Icon name="annoAuto" size={17} /></StatusButton>
        <StatusButton aria-label="Annotation"><Icon name="anno" size={17} /></StatusButton>
        <StatusButton $width={31}><WithCaret $gap={4}>1:1<Caret $size={4} /></WithCaret></StatusButton>
      </StatusGroup>
      <StatusGroup $width={37}>
        <StatusButton aria-label="Workspace"><Icon name="gear" size={16} /></StatusButton>
        <StatusButton $width={14} aria-label="Workspace options"><Caret $size={4} /></StatusButton>
      </StatusGroup>
      {['plus', 'shapes', 'screen', 'menu'].map(name => (
        <StatusGroup key={name} $width={22}>
          <StatusButton $width={22} aria-label={name}><Icon name={name} size={17} /></StatusButton>
        </StatusGroup>
      ))}
    </StatusTools>
  </StatusBar>
)

const App = () => (
  <Shell>
    <GlobalStyle />
    <Title />
    <TabBar>
      {tabs.map((tab, i) => <RibbonTab key={tab} $active={i === 0}>{tab}</RibbonTab>)}
      <Toggle aria-label="Minimize ribbon"><Caret $up $color="#333" /></Toggle>
      <Caret $size={3} />
    </TabBar>
    <RibbonPanels />
    <FileTabs>
      <IconButton aria-label="Files"><Icon name="menu" size={17} /></IconButton>
      <Slash $space={11} />
      <FlatTab>Start</FlatTab>
      <Group $before={8}>
        <SlantTab $pad={6}>
          <FlatTab>Drawing1*</FlatTab>
          <IconButton aria-label="Close drawing"><Icon name="closeTab" size={13} /></IconButton>
        </SlantTab>
      </Group>
      <Group $before={5} $gap={1}>
        <IconButton aria-label="New drawing"><Icon name="plus" size={17} /></IconButton>
        <Slash $space={10} />
      </Group>
    </FileTabs>
    <Workspace>
      <SideBar><Dots /><span>Project Manager</span></SideBar>
      <Canvas>
        <Model />
        <ViewLabel>[−][SE Isometric][2D Wireframe]</ViewLabel>
        <WindowButtons>
          <IconButton aria-label="Restore viewport"><Icon name="restore" size={13} /></IconButton>
          <IconButton aria-label="Close viewport"><Icon name="closeBold" size={16} /></IconButton>
        </WindowButtons>
        <Wcs>WCS</Wcs>
        <NavBar><NavIcons /></NavBar>
        <HoverTip>
          <strong>3D Solid</strong>
          <dl>
            <dt>Color</dt><dd><Swatch $size={10} $gap={2} $line />ByLayer</dd>
            <dt>Layer</dt><dd>0</dd>
            <dt>Linetype</dt><dd>ByLayer</dd>
          </dl>
        </HoverTip>
        <Properties />
        <CommandArea>
          <History><li>Command:</li><li>Command:</li><li>Command:</li></History>
          <CommandLine>
            <Grip />
            <IconButton aria-label="Close command line"><Icon name="closeTab" size={13} /></IconButton>
            <IconButton aria-label="Customize command line"><Icon name="wrench" size={16} /></IconButton>
            <CommandField>
              <Icon name="prompt" size={16} />
              <Caret $color="#444" />
              <input aria-label="Command" placeholder="Type a command" />
              <Caret $up $color="#333" />
            </CommandField>
          </CommandLine>
        </CommandArea>
      </Canvas>
      <SideBar><Dots /><span>Tool Palettes - All Palettes</span></SideBar>
    </Workspace>
    <Status />
  </Shell>
)

export default App
